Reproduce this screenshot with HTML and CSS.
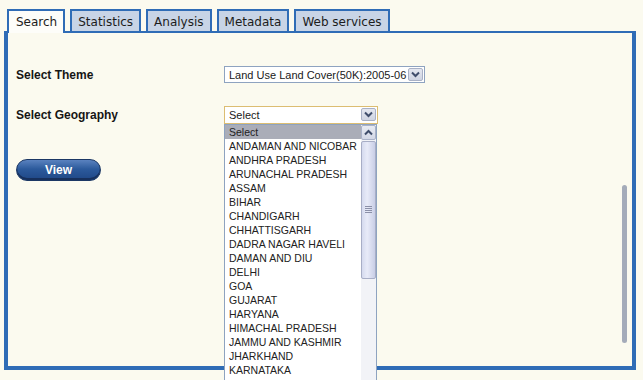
FILE: index.html
```html
<!DOCTYPE html>
<html>
<head>
<meta charset="utf-8">
<link rel="stylesheet" href="styles.css">
</head>
<body>
<div class="page">
  <div class="tabs">
    <div class="tab active">Search</div>
    <div class="tab">Statistics</div>
    <div class="tab">Analysis</div>
    <div class="tab">Metadata</div>
    <div class="tab">Web services</div>
  </div>
  <div class="panel">
    <div class="form">
      <div class="row">
        <div class="label">Select Theme</div>
        <div class="select theme">
          <span class="val">Land Use Land Cover(50K):2005-06</span>
          <span class="arrow"><svg width="9" height="7" viewBox="0 0 9 7"><path d="M1 1.5 L4.5 5 L8 1.5" fill="none" stroke="#3f4d6b" stroke-width="2"/></svg></span>
        </div>
      </div>
      <div class="row row2">
        <div class="label">Select Geography</div>
        <div class="select geo">
          <span class="val">Select</span>
          <span class="arrow"><svg width="9" height="7" viewBox="0 0 9 7"><path d="M1 1.5 L4.5 5 L8 1.5" fill="none" stroke="#3f4d6b" stroke-width="2"/></svg></span>
          <div class="list">
            <div class="items">
              <div class="item sel">Select</div>
              <div class="item">ANDAMAN AND NICOBAR</div>
              <div class="item">ANDHRA PRADESH</div>
              <div class="item">ARUNACHAL PRADESH</div>
              <div class="item">ASSAM</div>
              <div class="item">BIHAR</div>
              <div class="item">CHANDIGARH</div>
              <div class="item">CHHATTISGARH</div>
              <div class="item">DADRA NAGAR HAVELI</div>
              <div class="item">DAMAN AND DIU</div>
              <div class="item">DELHI</div>
              <div class="item">GOA</div>
              <div class="item">GUJARAT</div>
              <div class="item">HARYANA</div>
              <div class="item">HIMACHAL PRADESH</div>
              <div class="item">JAMMU AND KASHMIR</div>
              <div class="item">JHARKHAND</div>
              <div class="item">KARNATAKA</div>
            </div>
            <div class="lscroll">
              <div class="up"><svg width="9" height="7" viewBox="0 0 9 7"><path d="M1 5.5 L4.5 2 L8 5.5" fill="none" stroke="#3f4d6b" stroke-width="2"/></svg></div>
              <div class="thumb"><span class="grip"></span><span class="grip"></span><span class="grip"></span><span class="grip"></span></div>
            </div>
          </div>
        </div>
      </div>
      <button class="view">View</button>
    </div>
    <div class="vbar"></div>
  </div>
</div>
</body>
</html>
```

FILE: styles.css
```css
html, body {
  margin: 0;
  padding: 0;
  background: #fbfaef;
  width: 643px;
  height: 380px;
  overflow: hidden;
}
.page {
  padding: 9px 7px 0 4px;
}
.tabs {
  display: flex;
  gap: 5px;
  margin-left: 3px;
  height: 22px;
  align-items: flex-start;
  position: relative;
  z-index: 2;
}
.tab {
  box-sizing: border-box;
  height: 22px;
  line-height: 20px;
  padding: 1px 6px 0 6px;
  border: 2px solid #2f6cb6;
  border-bottom: none;
  background: #c8d4e6;
  font-family: "DejaVu Sans", Verdana, sans-serif;
  font-size: 12px;
  color: #1c1c1c;
}
.tab.active {
  background: #fdfdf9;
  height: 24px;
  padding-left: 7px;
}
.panel {
  position: relative;
  height: 333px;
  border: 4px solid #2f6cb6;
  border-top-width: 2px;
  background: #fbfaef;
}
.form {
  padding: 33px 0 0 8px;
}
.row {
  display: flex;
  align-items: center;
  height: 17px;
}
.row2 {
  margin-top: 23px;
}
.label {
  width: 208px;
  font-family: "Liberation Sans", Arial, sans-serif;
  font-weight: bold;
  font-size: 12px;
  color: #151515;
}
.select {
  position: relative;
  box-sizing: border-box;
  height: 17px;
  display: flex;
  align-items: center;
  background: #fff;
  border: 1px solid #8ea3c0;
  font-family: "Liberation Sans", Arial, sans-serif;
  font-size: 11px;
  color: #202020;
}
.select .val {
  flex: 1;
  padding-left: 4px;
  white-space: nowrap;
}
.theme {
  width: 201px;
}
.geo {
  width: 154px;
  height: 18px;
  border-color: #dcbd72;
}
.arrow {
  box-sizing: border-box;
  width: 15px;
  height: 13px;
  margin-right: 1px;
  display: flex;
  align-items: center;
  justify-content: center;
  background: linear-gradient(#e4e7f0, #cfd4e2);
  border: 1px solid #a9b1c6;
  border-radius: 2px;
}
.list {
  position: absolute;
  top: 17px;
  left: -1px;
  width: 153px;
  height: 262px;
  box-sizing: border-box;
  border: 1px solid #8ea3c0;
  border-bottom: none;
  background: #fff;
  display: flex;
}
.items {
  flex: 1;
  font-size: 10.5px;
}
.item {
  height: 14px;
  line-height: 14px;
  padding-left: 4px;
  white-space: nowrap;
  color: #222;
}
.item.sel {
  background: #aaadb8;
}
.lscroll {
  width: 15px;
  background: #f2f3f7;
  display: flex;
  flex-direction: column;
  gap: 1px;
}
.up {
  box-sizing: border-box;
  height: 15px;
  display: flex;
  align-items: center;
  justify-content: center;
  background: linear-gradient(#e8ebf3, #d3d8e6);
  border: 1px solid #aab2c8;
  border-radius: 2px;
}
.thumb {
  box-sizing: border-box;
  height: 138px;
  border: 1px solid #a8aec6;
  border-radius: 2px;
  background: linear-gradient(90deg, #d5daee, #e8ebf8 40%, #c9cee6);
  display: flex;
  flex-direction: column;
  align-items: center;
  justify-content: center;
  gap: 1px;
}
.grip {
  width: 7px;
  height: 1px;
  background: #8b90a8;
}
.view {
  display: block;
  margin-top: 36px;
  width: 85px;
  height: 22px;
  border: 1px solid #1b3764;
  border-radius: 11px;
  background: linear-gradient(#5a82bf, #2c5a9c 45%, #1f4786);
  box-shadow: inset 0 -2px 0 #17305c;
  color: #fff;
  font-family: "Liberation Sans", Arial, sans-serif;
  font-weight: bold;
  font-size: 12px;
  padding: 0;
}
.vbar {
  position: absolute;
  right: 5px;
  top: 152px;
  width: 5px;
  height: 158px;
  border-radius: 3px;
  background: #a4abb9;
}
```
